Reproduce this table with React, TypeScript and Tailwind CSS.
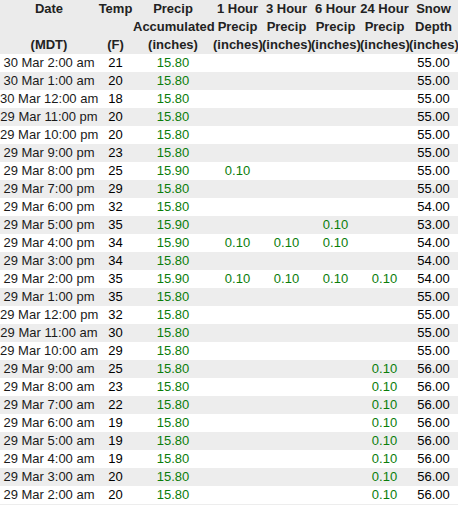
import React from 'react';

type Row = {
  date: string;
  temp: string;
  accum: string;
  h1?: string;
  h3?: string;
  h6?: string;
  h24?: string;
  depth: string;
};

const rows: Row[] = [
  { date: '30 Mar 2:00 am', temp: '21', accum: '15.80', depth: '55.00' },
  { date: '30 Mar 1:00 am', temp: '20', accum: '15.80', depth: '55.00' },
  { date: '30 Mar 12:00 am', temp: '18', accum: '15.80', depth: '55.00' },
  { date: '29 Mar 11:00 pm', temp: '20', accum: '15.80', depth: '55.00' },
  { date: '29 Mar 10:00 pm', temp: '20', accum: '15.80', depth: '55.00' },
  { date: '29 Mar 9:00 pm', temp: '23', accum: '15.80', depth: '55.00' },
  { date: '29 Mar 8:00 pm', temp: '25', accum: '15.90', h1: '0.10', depth: '55.00' },
  { date: '29 Mar 7:00 pm', temp: '29', accum: '15.80', depth: '55.00' },
  { date: '29 Mar 6:00 pm', temp: '32', accum: '15.80', depth: '54.00' },
  { date: '29 Mar 5:00 pm', temp: '35', accum: '15.90', h6: '0.10', depth: '53.00' },
  { date: '29 Mar 4:00 pm', temp: '34', accum: '15.90', h1: '0.10', h3: '0.10', h6: '0.10', depth: '54.00' },
  { date: '29 Mar 3:00 pm', temp: '34', accum: '15.80', depth: '54.00' },
  { date: '29 Mar 2:00 pm', temp: '35', accum: '15.90', h1: '0.10', h3: '0.10', h6: '0.10', h24: '0.10', depth: '54.00' },
  { date: '29 Mar 1:00 pm', temp: '35', accum: '15.80', depth: '55.00' },
  { date: '29 Mar 12:00 pm', temp: '32', accum: '15.80', depth: '55.00' },
  { date: '29 Mar 11:00 am', temp: '30', accum: '15.80', depth: '55.00' },
  { date: '29 Mar 10:00 am', temp: '29', accum: '15.80', depth: '55.00' },
  { date: '29 Mar 9:00 am', temp: '25', accum: '15.80', h24: '0.10', depth: '56.00' },
  { date: '29 Mar 8:00 am', temp: '23', accum: '15.80', h24: '0.10', depth: '56.00' },
  { date: '29 Mar 7:00 am', temp: '22', accum: '15.80', h24: '0.10', depth: '56.00' },
  { date: '29 Mar 6:00 am', temp: '19', accum: '15.80', h24: '0.10', depth: '56.00' },
  { date: '29 Mar 5:00 am', temp: '19', accum: '15.80', h24: '0.10', depth: '56.00' },
  { date: '29 Mar 4:00 am', temp: '19', accum: '15.80', h24: '0.10', depth: '56.00' },
  { date: '29 Mar 3:00 am', temp: '20', accum: '15.80', h24: '0.10', depth: '56.00' },
  { date: '29 Mar 2:00 am', temp: '20', accum: '15.80', h24: '0.10', depth: '56.00' },
];

// column widths in px: date, temp, accum, 1h, 3h, 6h, 24h, depth, (next col, clipped)
const cols = 'grid grid-cols-[98px_35px_80px_49px_49px_49px_49px_49px_49px]';

const headers: string[][] = [
  ['Date', 'Temp', 'Precip', '1 Hour', '3 Hour', '6 Hour', '24 Hour', 'Snow', ''],
  ['', '', 'Accumulated', 'Precip', 'Precip', 'Precip', 'Precip', 'Depth', ''],
  ['(MDT)', '(F)', '(inches)', '(inches)', '(inches)', '(inches)', '(inches)', '(inches)', '(inches)'],
];

export default function App() {
  return (
    <div className="w-[458px] h-[505px] overflow-hidden bg-[#ededed] font-['Liberation_Sans',Arial,sans-serif] text-[13px]">
      <div className="w-[490px]">
        {/* Header */}
        <div className="bg-[#ebebeb] font-bold text-[#222]">
          {headers.map((line, i) => (
            <div key={i} className={`${cols} h-[18px] leading-[18px]`}>
              {line.map((h, j) => (
                <div key={j} className="text-center whitespace-nowrap">{h}</div>
              ))}
            </div>
          ))}
        </div>

        {/* Rows */}
        {rows.map((r, i) => (
          <div
            key={i}
            className={`${cols} h-[18px] leading-[18px] ${i % 2 === 0 ? 'bg-white' : 'bg-[#ededed]'}`}
          >
            <div className="text-center whitespace-nowrap text-[#1a1a1a]">{r.date}</div>
            <div className="text-center text-black">{r.temp}</div>
            <div className="text-center text-[#0a7d0a]">{r.accum}</div>
            <div className="text-center text-[#0a7d0a]">{r.h1}</div>
            <div className="text-center text-[#0a7d0a]">{r.h3}</div>
            <div className="text-center text-[#0a7d0a]">{r.h6}</div>
            <div className="text-center text-[#0a7d0a]">{r.h24}</div>
            <div className="text-center text-black">{r.depth}</div>
            <div></div>
          </div>
        ))}
      </div>
    </div>
  );
}
